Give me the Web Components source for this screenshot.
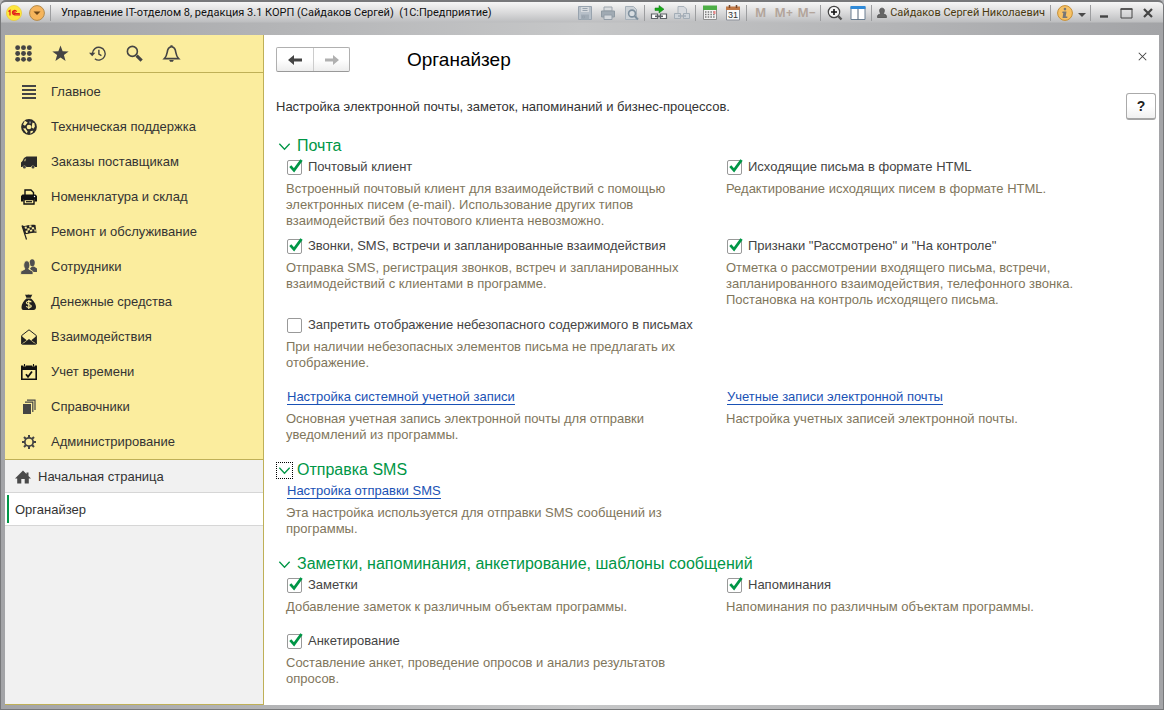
<!DOCTYPE html>
<html lang="ru">
<head>
<meta charset="utf-8">
<meta name="viewport" content="width=device-width, initial-scale=1">
<title>Управление IT-отделом 8 — Органайзер</title>
<style>
  html, body { margin: 0; height: 100%; }
  body { font: 13px/16px "Liberation Sans", Arial, sans-serif; color: #333; background: #b4b5b8; }
</style>
</head>
<body>
<app-window>
  <title-bar slot="title" caption="Управление IT-отделом 8, редакция 3.1 КОРП (Сайдаков Сергей)&nbsp; (1С:Предприятие)" user="Сайдаков Сергей Николаевич"></title-bar>
  <side-panel slot="side">
    <nav-item icon="menu">Главное</nav-item>
    <nav-item icon="ball">Техническая поддержка</nav-item>
    <nav-item icon="truck">Заказы поставщикам</nav-item>
    <nav-item icon="printer">Номенклатура и склад</nav-item>
    <nav-item icon="flag">Ремонт и обслуживание</nav-item>
    <nav-item icon="people">Сотрудники</nav-item>
    <nav-item icon="money">Денежные средства</nav-item>
    <nav-item icon="mail">Взаимодействия</nav-item>
    <nav-item icon="schedule">Учет времени</nav-item>
    <nav-item icon="books">Справочники</nav-item>
    <nav-item icon="gear">Администрирование</nav-item>
    <open-tab slot="tabs" icon="home">Начальная страница</open-tab>
    <open-tab slot="tabs" active>Органайзер</open-tab>
  </side-panel>
  <organizer-page heading="Органайзер" intro="Настройка электронной почты, заметок, напоминаний и бизнес-процессов.">
    <settings-section heading="Почта">
      <setting-check checked tight label="Почтовый клиент">Встроенный почтовый клиент для взаимодействий с помощью электронных писем (e-mail). Использование других типов взаимодействий без почтового клиента невозможно.</setting-check>
      <setting-check checked label="Исходящие письма в формате HTML">Редактирование исходящих писем в формате HTML.</setting-check>
      <setting-check checked label="Звонки, SMS, встречи и запланированные взаимодействия">Отправка SMS, регистрация звонков, встреч и запланированных взаимодействий с клиентами в программе.</setting-check>
      <setting-check checked tight label='Признаки "Рассмотрено" и "На контроле"'>Отметка о рассмотрении входящего письма, встречи, запланированного взаимодействия, телефонного звонка. Постановка на контроль исходящего письма.</setting-check>
      <setting-check wide label="Запретить отображение небезопасного содержимого в письмах">При наличии небезопасных элементов письма не предлагать их отображение.</setting-check>
      <setting-link label="Настройка системной учетной записи">Основная учетная запись электронной почты для отправки уведомлений из программы.</setting-link>
      <setting-link label="Учетные записи электронной почты">Настройка учетных записей электронной почты.</setting-link>
    </settings-section>
    <settings-section heading="Отправка SMS" current>
      <setting-link label="Настройка отправки SMS">Эта настройка используется для отправки SMS сообщений из программы.</setting-link>
    </settings-section>
    <settings-section heading="Заметки, напоминания, анкетирование, шаблоны сообщений">
      <setting-check checked label="Заметки">Добавление заметок к различным объектам программы.</setting-check>
      <setting-check checked label="Напоминания">Напоминания по различным объектам программы.</setting-check>
      <setting-check checked label="Анкетирование">Составление анкет, проведение опросов и анализ результатов опросов.</setting-check>
    </settings-section>
  </organizer-page>
</app-window>

<script>
const icons = {
  logo: '<circle cx="8" cy="8" r="7.6" fill="#fde63c" stroke="#e9c62a" stroke-width=".6"/><path d="M2.4 6.6 4 5.4v5.2M10.600 6.800A2.200 2.200 0 1 0 8.600 9.900H14M9.300 7.700A.8 .8 0 1 0 8.700 8.500H13.800" fill="none" stroke="#e2211c" stroke-width="1.2"/>',
  drop: '<circle cx="8" cy="8" r="7.400" fill="#f6b55c" stroke="#b28a4c"/><path d="M4.500 6.500h7L8 10z" fill="#6b4518"/>',
  save: '<path d="M1.500 1.500h13v13h-13z" fill="#b7c0c9" stroke="#98a3ae"/><path d="M4 2h8v5H4z" fill="#d6dade"/><path d="M4 9.500h8v5H4z" fill="#a1acb6"/><path d="M5.500 3.500h5M5.500 5.500h5M5.500 11h2v2h-2z" stroke="#98a3ae" fill="none"/>',
  print: '<path d="M4 2h8v4H4z" fill="#d9dcdf" stroke="#9da5ad"/><path d="M1.500 6h13v6h-13z" fill="#a0aab3" stroke="#8f9aa3"/><path d="M4 10h8v4.500H4z" fill="#d4d8dc" stroke="#939da7"/>',
  preview: '<path d="M2.500 1.500h8l3 3v10h-11z" fill="#ccd2d7" stroke="#a6b0b9"/><circle cx="9" cy="8.500" r="3.400" fill="#d9dee2" stroke="#7e8f9d" stroke-width="1.600"/><path d="m11.500 11 3.500 3.500" stroke="#7e8f9d" stroke-width="2"/>',
  link: '<path d="M.5 9h6v4.500h-6zM9.500 9h6v4.500h-6z" fill="#fff" stroke="#5d6266" stroke-width="1.200"/><path d="M4 11.300h8" stroke="#5d6266" stroke-width="1.600"/><path d="M4 3h4V.5L13 4.200 8 8V5.500H4z" fill="#18a818" stroke="#0b7a12" stroke-width=".5"/>',
  printlink: '<path d="M4 8V1.500h6l2.500 2.500v4" fill="#d7dade" stroke="#aab3bb"/><path d="M.5 8.500h6v5h-6zM9.500 8.500h6v5h-6z" fill="#cdd3d9" stroke="#a3adb6"/><path d="M4 11h8" stroke="#a3adb6" stroke-width="1.500"/>',
  calc: '<path d="M1.500 1.500h13v13h-13z" fill="#f4f4f4" stroke="#8f8f8f"/><path d="M1 .5h14v4.500H1z" fill="#4cae45"/><path d="M3 7h10M3 9.500h10M3 12h10" stroke="#777" stroke-width="1.300" stroke-dasharray="1.500 1.200"/><path d="M11.500 6h2v3h-2z" fill="#e88"/>',
  cal: '<path d="M1.500 2.500h13v12.500h-13z" fill="#fafafa" stroke="#8b8f98"/><path d="M1 1.500h14V5H1z" fill="#c17845"/><path d="M4.500 0v3M11.500 0v3" stroke="#75472b" stroke-width="1.500"/><text x="8" y="13" text-anchor="middle" font-family="Liberation Sans" font-size="9" fill="#333">31</text>',
  zoom: '<circle cx="7" cy="7" r="5.700" fill="#f4f4f4" stroke="#444" stroke-width="1.200"/><path d="M7 4v6M4 7h6" stroke="#111" stroke-width="1.600"/><path d="m11.200 11.200 3.300 3.300" stroke="#555" stroke-width="2.400"/>',
  panes: '<path d="M1 2h14v12.500H1z" fill="#fff" stroke="#6b7f92"/><path d="M.5 1h15v3H.5z" fill="#2f8ad8"/><path d="M8 4v10.500" stroke="#55677a"/>',
  user: '<path d="M8 1.500c2 0 3.200 1.300 3.200 3.200S10 8.500 9.800 9c.8 1 4.200.8 4.200 3.500V14H2v-1.500C2 9.800 5.400 10 6.200 9 6 8.500 4.800 6.600 4.800 4.700S6 1.500 8 1.500z" fill="#666" stroke="#4a4a4a"/>',
  info: '<circle cx="8" cy="8" r="7.400" fill="#f7c265" stroke="#c68f36"/><path d="M8 2.800a1.300 1.300 0 1 1-.1 2.600A1.300 1.300 0 0 1 8 2.800zM5.500 6.500H9.500L8.700 11.500H10.300V13H5.500L6.300 8H5.300z" fill="#777"/>',
  down: '<path d="M0 8h16l-8 8z" fill="#4a4a4a"/>',
  min: '<path d="M4 11.500h8" stroke="#444" stroke-width="2.400"/>',
  max: '<path d="M3 4h11v9H3z" fill="none" stroke="#444"/><path d="M2.500 4h12" stroke="#444" stroke-width="1.500"/>',
  close: '<path d="m4 4 8 8M12 4l-8 8" stroke="#444" stroke-width="2.200"/>',
  thinclose: '<path d="m4 4 8 8M12 4l-8 8" stroke="#444" stroke-width="1.100"/>',
  grid: [2.5, 8, 13.5].map(y => [2.5, 8, 13.5].map(x => `<circle cx="${x}" cy="${y}" r="2.300"/>`).join('')).join(''),
  star: '<path d="m8 .5 2 5.300 5.700.200-4.500 3.500 1.600 5.500L8 11.800 3.200 15l1.600-5.500L.3 6l5.700-.2z"/>',
  history: '<g fill="none" stroke="#444" stroke-width="1.300"><path d="M3.200 8A6 6 0 1 1 5.500 12.900"/><path d="M9.300 4.500V8.500L11.700 10"/></g><path d="M0 7.300h6L3 10.600z"/>',
  search: '<circle cx="6" cy="6" r="4.700" fill="none" stroke="#444" stroke-width="1.500"/><path d="m10 10 4.700 4.700" stroke="#444" stroke-width="3"/>',
  bell: '<path d="M1.300 12.800C4 10.300 3.700 7.300 4.500 4.500 5.200 2.500 6.200 1.600 8 1.600s2.800.9 3.500 2.900c.8 2.800.5 5.800 3.200 8.300z" fill="none" stroke="#444" stroke-width="1.500"/><path d="M7 .2h2v1.500H7zM5.800 14h4.400L9.300 15.800H6.700z"/>',
  menu: '<path d="M1 1h14v2H1zM1 5h14v2H1zM1 9h14v2H1zM1 13h14v2H1z"/>',
  ball: '<circle cx="8" cy="8" r="7.900" fill="#2b2b2b"/><circle cx="8" cy="8" r="2.300" fill="#fbed9e"/><path d="M3.800 1.800 6.700 3.600 4 6.800 2 5.500M13.900 7.500 12.500 9.700 10.500 8.500 11.500 3.600 13.400 4.200M2 9.500 4.500 9.200 6.700 12.700 5.600 14.200M9.500 12 12.300 11.700 11.500 13.600 9.300 14.700" fill="#fbed9e"/><path d="M8.500 2.200 10.200 2.700 9.600 4.700 8 4.300z" fill="#888"/>',
  truck: '<path d="M0 13V8.500L1.500 7 3 4l2.500-1.500H16V13H14a2.200 2.200 0 0 0-4.200 0H5.500a2.200 2.200 0 0 0-4.200 0z" fill="#2a2a2a"/><circle cx="3.400" cy="13" r="1.500"/><circle cx="12" cy="13" r="1.500"/><path d="M3.900 4.800H5.200L4.500 7.200H2.800z" fill="#a39c70"/>',
  printer: '<path d="M4 6V1h6l2.500 2.500V6" fill="#fbed9e" stroke="#111" stroke-width="1.400"/><path d="M1.500 5.500h13L16 7v5.500h-2.500V10h-11v2.500H0V7z" fill="#111"/><path d="M3 10.500h10V15H3z" fill="#fbed9e" stroke="#111" stroke-width="1.400"/><path d="M5 12.700h6" stroke="#111" stroke-width="1.200"/><circle cx="13.500" cy="7.500" r=".7" fill="#fff"/>',
  flag: '<path d="m1 1.500 4.500 14" stroke="#222" stroke-width="1.200"/><path d="M1 1.600C5 3 7 0 14.500 1L15.500 9C10 8 7.500 11 3.700 9.700z" fill="#222"/><path d="m3.500 2.700 2-.2.500 2-2 .3zM8 1.600l2.300-.3.300 1.900-2.200.4zM6.200 4.600l2.200-.6.400 2-2.200.7zM10.700 3.200h2.300l.3 2H11zM4.500 6.700l2-.1.600 1.900-2 .4zM8.900 6l2.200-.6.300 1.900-2.200.5zM13.300 5.500l1.300.1.300 2h-1.400z" fill="#fbed9e"/>',
  people: '<g fill="#4f4f4f"><ellipse cx="11.200" cy="3.800" rx="2.600" ry="3.500"/><path d="M9 9.500 11 7.500h2L16 9.500v3.500h-5z"/></g><g fill="#4f4f4f" stroke="#fbed9e" stroke-width=".8"><path d="M-.3 15.500v-3C.8 11.300 3 11 4 10 2 8 2.300 1.800 5.800 1.800S9.500 8 7.600 10c1 1 3.400 1.300 4.400 2.500v3z"/></g>',
  money: '<path d="M4 .5c1.500.7 2 0 3.500 0s2 .6 3.800 0L9.800 3.700H5.400zM5.400 4.500h4.500C12.500 6.500 15 10 15 13c0 2-1 3-2.500 3h-10C1 16 .5 15 .5 13c0-3 2.400-6.500 4.900-8.500z" fill="#202020"/><path d="M10.300 8.200C9.500 6.800 5.400 6.800 5.400 8.800S10.300 10.200 10.300 12 6.300 14 5.300 12.300M7.800 6v9" fill="none" stroke="#fbed9e" stroke-width="1.200"/>',
  mail: '<path d="M.7 6.500 8 .8l7.300 5.700V15H.7z" fill="#fbed9e" stroke="#222"/><path d="m.5 7 5.200 4.200L.5 15zM15.500 7l-5.200 4.200 5.200 3.800zM1 15.500 8 10l7 5.500z" fill="#222"/>',
  schedule: '<path d="M.8 3h14.400v12.200H.8z" fill="#fbed9e" stroke="#111" stroke-width="1.600"/><path d="M0 1.500h16V6H0z" fill="#111"/><path d="M3.500 0v2.500M12.500 0v2.500" stroke="#fbed9e" stroke-width="2.400"/><path d="M3.500 0v2.500M12.500 0v2.500" stroke="#111" stroke-width="1.100"/><path d="m5 10.300 2 2.500 4-5.300" fill="none" stroke="#111" stroke-width="1.800"/>',
  books: '<path d="M2 5h8v10H2z"/><path d="M4 3.200h7.800V13M6 1.200h8V11" fill="none" stroke="#444" stroke-width="1.200"/>',
  gear: '<circle cx="8" cy="8" r="4.200" fill="none" stroke="#444" stroke-width="1.800"/><path d="M8 1v3M8 12v3M1 8h3M12 8h3M3 3l2 2M11 11l2 2M13 3l-2 2M5 11l-2 2" stroke="#444" stroke-width="2"/>',
  home: '<path d="M8 1.500 11.500 5V3.500h2V7L16 9.500h-2.200V14.500H9.700V10H6.300v4.500H2.200V9.500H0z" fill="#4a4a4a"/>',
  back: '<path d="M1 8 7 3v3.500h8v3H7V13z"/>',
  forward: '<path d="M15 8 9 3v3.500H1v3h8V13z" fill="#b0b0b0"/>',
  chevron: '<path d="m2.500 5 5.500 6 5.500-6" fill="none" stroke="#009646" stroke-width="1.400"/>',
  tick: '<path d="m3.500 6.500 4 4.500L15.500 0" fill="none" stroke="#009646" stroke-width="3"/>'
};

function define(name, render) {
  customElements.define(name, class extends HTMLElement {
    constructor() {
      super();
      this.attachShadow({ mode: 'open' });
    }
    connectedCallback() {
      const template = document.createElement('template');
      template.innerHTML = '<style>*{box-sizing:border-box}button,input{margin:0;padding:0;font:inherit;color:inherit}</style>' + render(this);
      this.shadowRoot.replaceChildren(template.content.cloneNode(true));
    }
  });
}
const attr = (el, name) => (el.getAttribute(name) || '').replace(/&/g, '&amp;').replace(/"/g, '&quot;');
const icon = name => `<ui-icon name="${name}"></ui-icon>`;

define('ui-icon', el => `
  <style>
    :host { display: block; flex: none; width: var(--icon-size, 16px); height: var(--icon-size, 16px); }
    svg { display: block; width: 100%; height: 100%; fill: #444; overflow: visible; }
  </style>
  <svg viewBox="0 0 16 16" aria-hidden="true">${icons[el.getAttribute('name')]}</svg>`);

define('app-window', () => `
  <style>
    :host { display: flex; flex-direction: column; box-sizing: border-box; min-height: 100vh; padding: 0 4px 4px;
      border: 1px solid #77787a; border-top: 0; border-radius: 6px 6px 0 0;
      background: linear-gradient(90deg, #a3a4a7, #c6c7c8 50%, #a3a4a7); }
    .body { flex: 1; display: grid; grid-template-columns: 259px minmax(0, 1fr); background: #fff; }
  </style>
  <slot name="title"></slot>
  <div class="body"><slot name="side"></slot><slot></slot></div>`);

define('title-bar', el => `
  <style>
    :host { display: flex; align-items: center; height: 35px; box-sizing: border-box; padding: 1px 4px 12px 1px; margin: 0 -4px;
      border-top: 2px solid #77787a; border-radius: 5px 5px 0 0; color: #222; font: 11px/16px Roboto, sans-serif;
      background: linear-gradient(180deg, #f6f6f6, #dcdcdd 10px, #bdbec0 20px, transparent 21px);
      white-space: nowrap; }
    button { flex: none; display: grid; place-items: center; width: 23px; height: 20px; border: 0; background: none; }
    .mem { font: bold 12px/16px "Open Sans", sans-serif; color: #b3a59b; }
    i { flex: none; width: 1px; height: 16px; margin: 0 2px; background: #9c9d9f; }
    h1 { flex: 1; min-width: 0; overflow: hidden; margin: 0 0 0 8px; font: inherit; color: #111; }
    .user { display: flex; align-items: center; gap: 2px; width: auto; padding: 0 3px 0 2px; color: #4a3a10; --icon-size: 12px; }
    .arrow { width: 12px; --icon-size: 8px; }
    .win { width: 22px; }
  </style>
  <button aria-label="Главное меню">${icon('logo')}</button>
  <button aria-label="Список">${icon('drop')}</button>
  <i></i>
  <h1>${attr(el, 'caption')}</h1>
  <button aria-label="Сохранить">${icon('save')}</button>
  <button aria-label="Печать">${icon('print')}</button>
  <button aria-label="Просмотр">${icon('preview')}</button>
  <i></i>
  <button aria-label="Получить ссылку">${icon('link')}</button>
  <button aria-label="Перейти по ссылке">${icon('printlink')}</button>
  <i></i>
  <button aria-label="Калькулятор">${icon('calc')}</button>
  <button aria-label="Календарь">${icon('cal')}</button>
  <i></i>
  <button class="mem">M</button>
  <button class="mem">M+</button>
  <button class="mem">M−</button>
  <i></i>
  <button aria-label="Масштаб">${icon('zoom')}</button>
  <button aria-label="Панели">${icon('panes')}</button>
  <i></i>
  <button class="user">${icon('user')}<span>${attr(el, 'user')}</span></button>
  <i></i>
  <button aria-label="Сведения">${icon('info')}</button>
  <button class="arrow" aria-label="Еще">${icon('down')}</button>
  <i></i>
  <button class="win" aria-label="Свернуть">${icon('min')}</button>
  <button class="win" aria-label="Развернуть">${icon('max')}</button>
  <button class="win" aria-label="Закрыть">${icon('close')}</button>`);

define('side-panel', () => `
  <style>
    :host { display: flex; flex-direction: column; box-sizing: border-box; background: #f1f1f1;
      border-right: 1px solid #bfb057; border-bottom: 1px solid #bfb057; }
    .tools { display: flex; gap: 1px; height: 38px; box-sizing: border-box; background: #fbed9e; border-bottom: 1px solid #bfb057; }
    .tools button { display: grid; place-items: center; width: 36px; border: 0; background: none; --icon-size: 17px; }
    nav { padding-top: 1px; background: #fbed9e; border-bottom: 1px solid #bfb057; }
  </style>
  <div class="tools">
    <button aria-label="Все функции">${icon('grid')}</button>
    <button aria-label="Избранное">${icon('star')}</button>
    <button aria-label="История">${icon('history')}</button>
    <button aria-label="Поиск">${icon('search')}</button>
    <button aria-label="Оповещения">${icon('bell')}</button>
  </div>
  <nav><slot></slot></nav>
  <slot name="tabs"></slot>`);

define('nav-item', el => `
  <style>
    :host { display: block; }
    a { display: flex; align-items: center; gap: 14px; height: 35px; padding-left: 16px; color: #333; text-decoration: none; }
  </style>
  <a href="#">${icon(el.getAttribute('icon'))}<slot></slot></a>`);

define('open-tab', el => `
  <style>
    :host { display: block; }
    a { display: flex; align-items: center; gap: 7px; height: 33px; padding: 2px 0 0 10px; border-bottom: 1px solid #d6d6d6; color: #333; text-decoration: none; }
    :host([active]) a { background: linear-gradient(#009646, #009646) 2px 2px / 2px 28px no-repeat #fff; }
  </style>
  <a href="#">${el.hasAttribute('icon') ? icon(el.getAttribute('icon')) : ''}<slot></slot></a>`);

define('organizer-page', el => `
  <style>
    :host { display: block; padding: 11px 3px 0 12px; }
    header { display: flex; align-items: center; height: 27px; }
    .history { display: flex; height: 25px; border: 1px solid #b0b0b0; border-bottom-color: #999; border-radius: 2px; background: linear-gradient(#fff 50%, #ededed); }
    .history button { display: grid; place-items: center; width: 36px; border: 0; background: none; }
    .history button + button { border-left: 1px solid #ccc; }
    h1 { flex: 1; margin: 0 0 0 57px; font: 19px/26px "Liberation Sans", Arial, sans-serif; color: #000; }
    .close { align-self: flex-start; display: grid; place-items: center; width: 28px; height: 20px; border: 0; background: none; --icon-size: 15px; }
    .intro { display: flex; align-items: center; justify-content: space-between; height: 27px; margin: 20px 0 15px; }
    p { margin: 0; }
    .help { width: 30px; height: 27px; border: 1px solid #aaa; border-bottom: 2px solid #a4a4a4; border-radius: 3px; background: linear-gradient(#fff 50%, #f0f0f0); font: bold 14px/20px "Liberation Sans", Arial, sans-serif; color: #222; }
  </style>
  <header>
    <div class="history">
      <button aria-label="Назад">${icon('back')}</button>
      <button aria-label="Вперед" disabled>${icon('forward')}</button>
    </div>
    <h1>${attr(el, 'heading')}</h1>
    <button class="close" aria-label="Закрыть">${icon('thinclose')}</button>
  </header>
  <div class="intro"><p>${attr(el, 'intro')}</p><button class="help">?</button></div>
  <slot></slot>`);

define('settings-section', el => `
  <style>
    :host { display: block; }
    h2 { margin: 0; font: 16px/22px "Liberation Sans", Arial, sans-serif; color: #009646; }
    button { display: flex; align-items: center; gap: 4px; height: 22px; border: 0; background: none; text-align: left; }
    .fold { padding: 1px 1px; }
    :host([current]) .fold { outline: 1px dotted #000; outline-offset: -1px; }
    ui-icon { --icon-size: 15px; }
    .grid { display: grid; grid-template-columns: minmax(0, 440px) minmax(0, 1fr); padding-left: 10px; }
  </style>
  <h2><button aria-expanded="true"><span class="fold">${icon('chevron')}</span>${attr(el, 'heading')}</button></h2>
  <div class="grid"><slot></slot></div>`);

const itemStyle = `
  :host { display: block; margin-bottom: 16px; }
  :host([tight]) { margin-bottom: 7px; }
  :host([wide]) { grid-column: 1 / -1; }
  .head { display: flex; align-items: center; gap: 6px; height: 20px; margin-left: 1px; white-space: nowrap; }
  p { margin: 4px 0 0; max-width: 400px; color: #7f765c; }`;

define('setting-check', el => `
  <style>${itemStyle}
    .head { color: #444; }
    .box { display: grid; }
    .box > * { grid-area: 1 / 1; }
    input { appearance: none; width: 15px; height: 15px; border: 1px solid #999; border-radius: 2px; background: #fff; }
    ui-icon { --icon-size: 15px; pointer-events: none; }
  </style>
  <label class="head"><span class="box"><input type="checkbox" ${el.hasAttribute('checked') ? 'checked' : ''} aria-describedby="note">${el.hasAttribute('checked') ? icon('tick') : ''}</span>${attr(el, 'label')}</label>
  <p id="note"><slot></slot></p>`);

define('setting-link', el => `
  <style>${itemStyle}
    a { color: #1a52b5; line-height: 14px; text-decoration: none; border-bottom: 1px solid #1a52b5; }
  </style>
  <div class="head"><a href="#">${attr(el, 'label')}</a></div>
  <p><slot></slot></p>`);
</script>
</body>
</html>
